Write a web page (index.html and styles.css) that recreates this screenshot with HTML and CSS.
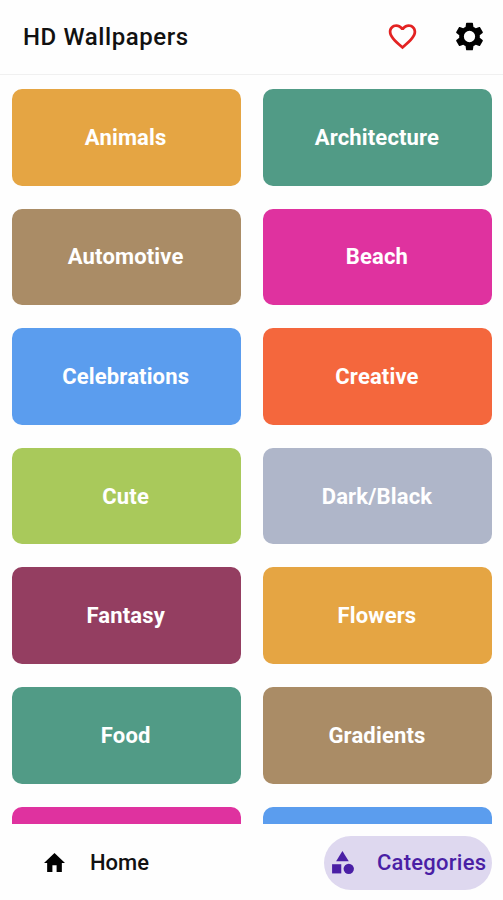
FILE: index.html
```
<!DOCTYPE html>
<html lang="en">
<head>
  <meta charset="UTF-8">
  <meta name="viewport" content="width=device-width, initial-scale=1.0">
  <title>HD Wallpapers</title>
  <link rel="stylesheet" href="styles.css">
</head>
<body>
  <header class="topbar">
    <h1>HD Wallpapers</h1>
    <div class="actions">
      <button class="icon-btn favorite" aria-label="Favorites">
        <svg viewBox="0 0 24 24"><path d="M16.5 3c-1.74 0-3.41.81-4.5 2.09C10.91 3.81 9.24 3 7.5 3 4.42 3 2 5.42 2 8.5c0 3.78 3.4 6.86 8.55 11.54L12 21.35l1.45-1.32C18.6 15.36 22 12.28 22 8.5 22 5.42 19.58 3 16.5 3zm-4.4 15.55l-.1.1-.1-.1C7.14 14.24 4 11.39 4 8.5 4 6.5 5.5 5 7.5 5c1.54 0 3.04.99 3.57 2.36h1.87C13.46 5.99 14.96 5 16.5 5c2 0 3.5 1.5 3.5 3.5 0 2.89-3.14 5.74-7.9 10.05z"/></svg>
      </button>
      <button class="icon-btn" aria-label="Settings">
        <svg viewBox="0 0 24 24"><path d="M19.5 12c0-.34-.03-.66-.07-.98l2.11-1.65c.19-.15.24-.42.12-.64l-2-3.46c-.12-.22-.39-.3-.61-.22l-2.49 1c-.52-.4-1.08-.73-1.69-.98l-.38-2.65C14.46 2.18 14.25 2 14 2h-4c-.25 0-.46.18-.49.42l-.38 2.65c-.61.25-1.17.59-1.69.98l-2.49-1c-.23-.09-.49 0-.61.22l-2 3.46c-.13.22-.07.49.12.64l2.11 1.65c-.04.32-.07.65-.07.98s.03.66.07.98l-2.11 1.65c-.19.15-.24.42-.12.64l2 3.46c.12.22.39.3.61.22l2.49-1c.52.4 1.08.73 1.69.98l.38 2.65c.03.24.24.42.49.42h4c.25 0 .46-.18.49-.42l.38-2.65c.61-.25 1.17-.59 1.69-.98l2.49 1c.23.09.49 0 .61-.22l2-3.46c.12-.22.07-.49-.12-.64l-2.11-1.65c.04-.32.07-.64.07-.98zM12 16.1a4.1 4.1 0 1 1 0-8.2 4.1 4.1 0 0 1 0 8.2z"/></svg>
      </button>
    </div>
  </header>

  <main class="categories">
    <a class="tile orange">Animals</a>
    <a class="tile green">Architecture</a>
    <a class="tile brown">Automotive</a>
    <a class="tile pink">Beach</a>
    <a class="tile blue">Celebrations</a>
    <a class="tile red">Creative</a>
    <a class="tile lime">Cute</a>
    <a class="tile gray">Dark/Black</a>
    <a class="tile plum">Fantasy</a>
    <a class="tile orange">Flowers</a>
    <a class="tile green">Food</a>
    <a class="tile brown">Gradients</a>
    <a class="tile pink"></a>
    <a class="tile blue"></a>
  </main>

  <nav class="bottom-nav">
    <a class="nav-item">
      <svg class="home-icon" viewBox="2 3 20 17" preserveAspectRatio="none"><path d="M10 20v-6h4v6h5v-8h3L12 3 2 12h3v8z"/></svg>
      <span>Home</span>
    </a>
    <a class="nav-item active">
      <svg class="category-icon" viewBox="3 2 19 20"><path d="M12 2l-5.5 9h11z"/><circle cx="17.5" cy="17.5" r="4.5"/><path d="M3 13.5h8v8H3z"/></svg>
      <span>Categories</span>
    </a>
  </nav>
</body>
</html>
```
FILE: styles.css
```
* {
  box-sizing: border-box;
}
body {
  display: flex;
  flex-direction: column;
  height: 900px;
  margin: 0;
  overflow: hidden;
  font-family: Roboto, sans-serif;
  background-color: #fefefe;
  color: #111;
}
.topbar {
  display: flex;
  justify-content: space-between;
  align-items: center;
  height: 75px;
  padding: 0 17px 1px 23px;
  border-bottom: 1px solid #f0f0f0;
}
h1 {
  margin: 0;
  font-size: 24px;
  font-weight: 500;
  letter-spacing: 0.58px;
}
.actions {
  display: flex;
  gap: 34px;
}
.icon-btn {
  width: 33px;
  height: 33px;
  padding: 0;
  border: none;
  background: none;
  color: #000;
}
.icon-btn svg {
  display: block;
  width: 33px;
  height: 33px;
}
.favorite {
  color: #e32222;
}
svg {
  fill: currentColor;
}
.categories {
  flex: 1;
  display: grid;
  grid-template-columns: 1fr 1fr;
  grid-auto-rows: 96.6px;
  gap: 23px 22.6px;
  min-height: 0;
  padding: 14px 11.2px 0 11.8px;
  overflow: hidden;
}
.tile {
  display: flex;
  justify-content: center;
  align-items: center;
  padding-right: 1px;
  border-radius: 10px;
  color: #fff;
  font-size: 22px;
  font-weight: 700;
  letter-spacing: 0.15px;
}
.orange {
  background-color: #e5a543;
}
.green {
  background-color: #519b86;
}
.brown {
  background-color: #aa8c66;
}
.pink {
  background-color: #df329f;
}
.blue {
  background-color: #5b9dee;
}
.red {
  background-color: #f4673d;
}
.lime {
  background-color: #a9c95b;
}
.gray {
  background-color: #afb6c9;
}
.plum {
  background-color: #943e61;
}
.bottom-nav {
  display: flex;
  justify-content: space-between;
  align-items: center;
  height: 76px;
  padding: 1px 11px 0 36px;
}
.nav-item {
  display: flex;
  align-items: center;
  height: 54px;
  padding: 0 8px;
  border-radius: 27px;
  font-size: 22px;
  font-weight: 500;
}
.active {
  width: 168px;
  padding-right: 0;
  background-color: #ded8ef;
  color: #4a1fa5;
  letter-spacing: 0.25px;
}
.home-icon {
  width: 21px;
  height: 19px;
  margin-right: 25px;
  color: #000;
}
.category-icon {
  flex: none;
  width: 22px;
  height: 23px;
  margin-right: 23px;
}
```
